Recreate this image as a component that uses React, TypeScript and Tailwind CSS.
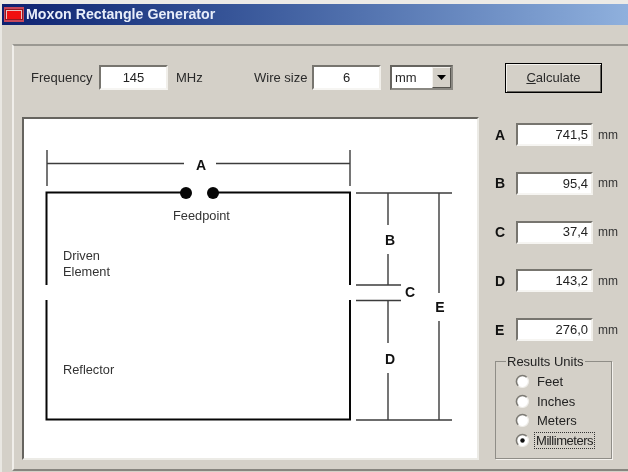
const FONT = "font-['Liberation_Sans',Arial,sans-serif]";

function Sunken({ value, className }: { value: string; className: string }) {
  return (
    <div
      className={`flex items-center border-2 border-t-[#77756f] border-l-[#77756f] border-r-[#f1efea] border-b-[#f6f5f2] bg-white text-[13px] text-[#222] ${className}`}
    >
      {value}
    </div>
  );
}

function ResultRow({ letter, value }: { letter: string; value: string }) {
  return (
    <div className="flex h-[23px] items-center">
      <span className="w-[21px] text-[14px] font-bold leading-none text-[#111]">{letter}</span>
      <Sunken value={value} className="h-[23px] w-[77px] justify-end pr-[3px]" />
      <span className="ml-[5px] text-[12px] text-[#333]">mm</span>
    </div>
  );
}

function Radio({ label, checked }: { label: string; checked?: boolean }) {
  return (
    <div className="flex h-[19.5px] items-center">
      <svg width="15" height="15" viewBox="0 0 15 15" className="shrink-0">
        <circle cx="7.5" cy="7.5" r="6" fill="#fff" />
        <path d="M11.7 3.2A6 6 0 0 0 3.2 11.7" fill="none" stroke="#7d7b75" strokeWidth="1.6" />
        <path d="M12.2 3.8A6 6 0 0 1 3.8 12.2" fill="none" stroke="#eeece7" strokeWidth="1.4" />
        {checked && <circle cx="7.5" cy="7.5" r="2.2" fill="#111" />}
      </svg>
      <span
        className={`text-[13px] leading-none text-[#222] ${
          checked
            ? "ml-[4px] border border-dotted border-[#333] px-px py-[1px] tracking-[-0.45px]"
            : "ml-[5px] px-[2px]"
        }`}
      >
        {label}
      </span>
    </div>
  );
}

function Diagram() {
  const t = "#3c3c3c";
  const k = "#060606";
  return (
    <svg width="453" height="339" viewBox="24 119 453 339" className="block">
      <g stroke={t} strokeWidth="1.4" fill="none">
        <path d="M47 150V186M350 150V186M47 163.5H184M216 163.5H350" />
        <path d="M356 193H452M356 285H401M356 300.5H401M356 420H452" />
        <path d="M388 193V225M388 254V285M388 300V343M388 373V420M439 193V293M439 321V420" />
      </g>
      <g stroke={k} fill="none">
        <path strokeWidth="2" d="M46.5 285V192.5H186M213 192.5H350V285" />
        <path strokeWidth="2" d="M46.5 300V419.5H350V300" />
      </g>
      <circle cx="186" cy="193" r="6" fill={k} />
      <circle cx="213" cy="193" r="6" fill={k} />
      <g fontFamily="'Liberation Sans', Arial, sans-serif" fontWeight="700" fontSize="14" fill="#111" textAnchor="middle">
        <text x="201" y="170">A</text>
        <text x="390" y="245">B</text>
        <text x="410" y="297">C</text>
        <text x="390" y="364">D</text>
        <text x="440" y="312">E</text>
      </g>
      <g fontFamily="'Liberation Sans', Arial, sans-serif" fontSize="12.8" fill="#333">
        <text x="173" y="220">Feedpoint</text>
        <text x="63" y="260">Driven</text>
        <text x="63" y="276">Element</text>
        <text x="63" y="374">Reflector</text>
      </g>
    </svg>
  );
}

export default function App() {
  return (
    <div className={`${FONT} flex h-[472px] w-[628px] flex-col overflow-hidden border-l-2 border-t-[4px] border-l-[#e9e7e2] border-t-[#eceae6] bg-[#d4d0c8] blur-[0.35px]`}>
      <div className="-ml-px flex h-[21px] shrink-0 items-center bg-gradient-to-r from-[#0e2070] to-[#8fb0dd] pl-[3px]">
        <svg width="20" height="15" viewBox="0 0 20 15" className="shrink-0">
          <rect width="20" height="15" fill="#c8485a" />
          <rect x="1.5" y="2.5" width="17" height="10" fill="#e8c4c4" stroke="#8e1a24" />
          <rect x="3" y="4" width="14" height="8" fill="#f01010" />
        </svg>
        <span className="ml-[2px] text-[14.2px] font-bold text-[#e8eefa]">Moxon Rectangle Generator</span>
      </div>
      <div className="ml-[10px] mt-[19px] flex h-[427px] w-[640px] shrink-0 flex-col border-2 border-t-[#9a9892] border-l-[#f0eeea] border-b-[#87857f] border-r-[#87857f] pl-[8px]">
        <div className="flex h-[71px] shrink-0 items-center pb-[8px] text-[13px] text-[#2a2a2a]">
          <span className="ml-[9px] w-[68px]">Frequency</span>
          <Sunken value="145" className="h-[25px] w-[69px] justify-center" />
          <span className="ml-[8px] w-[78px]">MHz</span>
          <span className="w-[58px]">Wire size</span>
          <Sunken value="6" className="h-[25px] w-[69px] justify-center" />
          <div className="ml-[9px] flex h-[25px] w-[63px] items-center border-2 border-t-[#66645f] border-l-[#66645f] border-r-[#8a8882] border-b-[#8a8882] bg-white pl-[3px] text-[13px]">
            <span className="flex-1">mm</span>
            <div className="flex h-[21px] w-[19px] items-center justify-center border border-t-[#f4f2ee] border-l-[#f4f2ee] border-r-[#55534e] border-b-[#55534e] bg-[#d4d0c8]">
              <svg width="9" height="5" viewBox="0 0 9 5"><path d="M0 0H9L4.5 5Z" fill="#000" /></svg>
            </div>
          </div>
          <button className="ml-[52px] flex h-[30px] w-[97px] items-center justify-center border border-black bg-[#d4d0c8] text-[13px] text-[#2a2a2a] shadow-[inset_1px_1px_0_#f4f2ee,inset_-1px_-1px_0_#66645f]">
            <span><span className="underline">C</span>alculate</span>
          </button>
        </div>
        <div className="flex">
          <div className="h-[343px] w-[457px] border-2 border-t-[#66645f] border-l-[#66645f] border-r-[#ecebe6] border-b-[#ecebe6] bg-white">
            <Diagram />
          </div>
          <div className="ml-[16px] flex flex-col pt-[6px]">
            <div className="flex flex-col gap-[25.75px]">
              <ResultRow letter="A" value="741,5" />
              <ResultRow letter="B" value="95,4" />
              <ResultRow letter="C" value="37,4" />
              <ResultRow letter="D" value="143,2" />
              <ResultRow letter="E" value="276,0" />
            </div>
            <fieldset className="mt-[13px] h-[105px] w-[117px] border border-[#8f8d87] pb-[3px] pl-[19px] pt-[3px] shadow-[1px_1px_0_#f4f2ee]">
              <legend className="-ml-[9px] px-[1px] text-[13px] leading-[15px] text-[#222]">Results Units</legend>
              <Radio label="Feet" />
              <Radio label="Inches" />
              <Radio label="Meters" />
              <Radio label="Millimeters" checked />
            </fieldset>
          </div>
        </div>
      </div>
    </div>
  );
}
